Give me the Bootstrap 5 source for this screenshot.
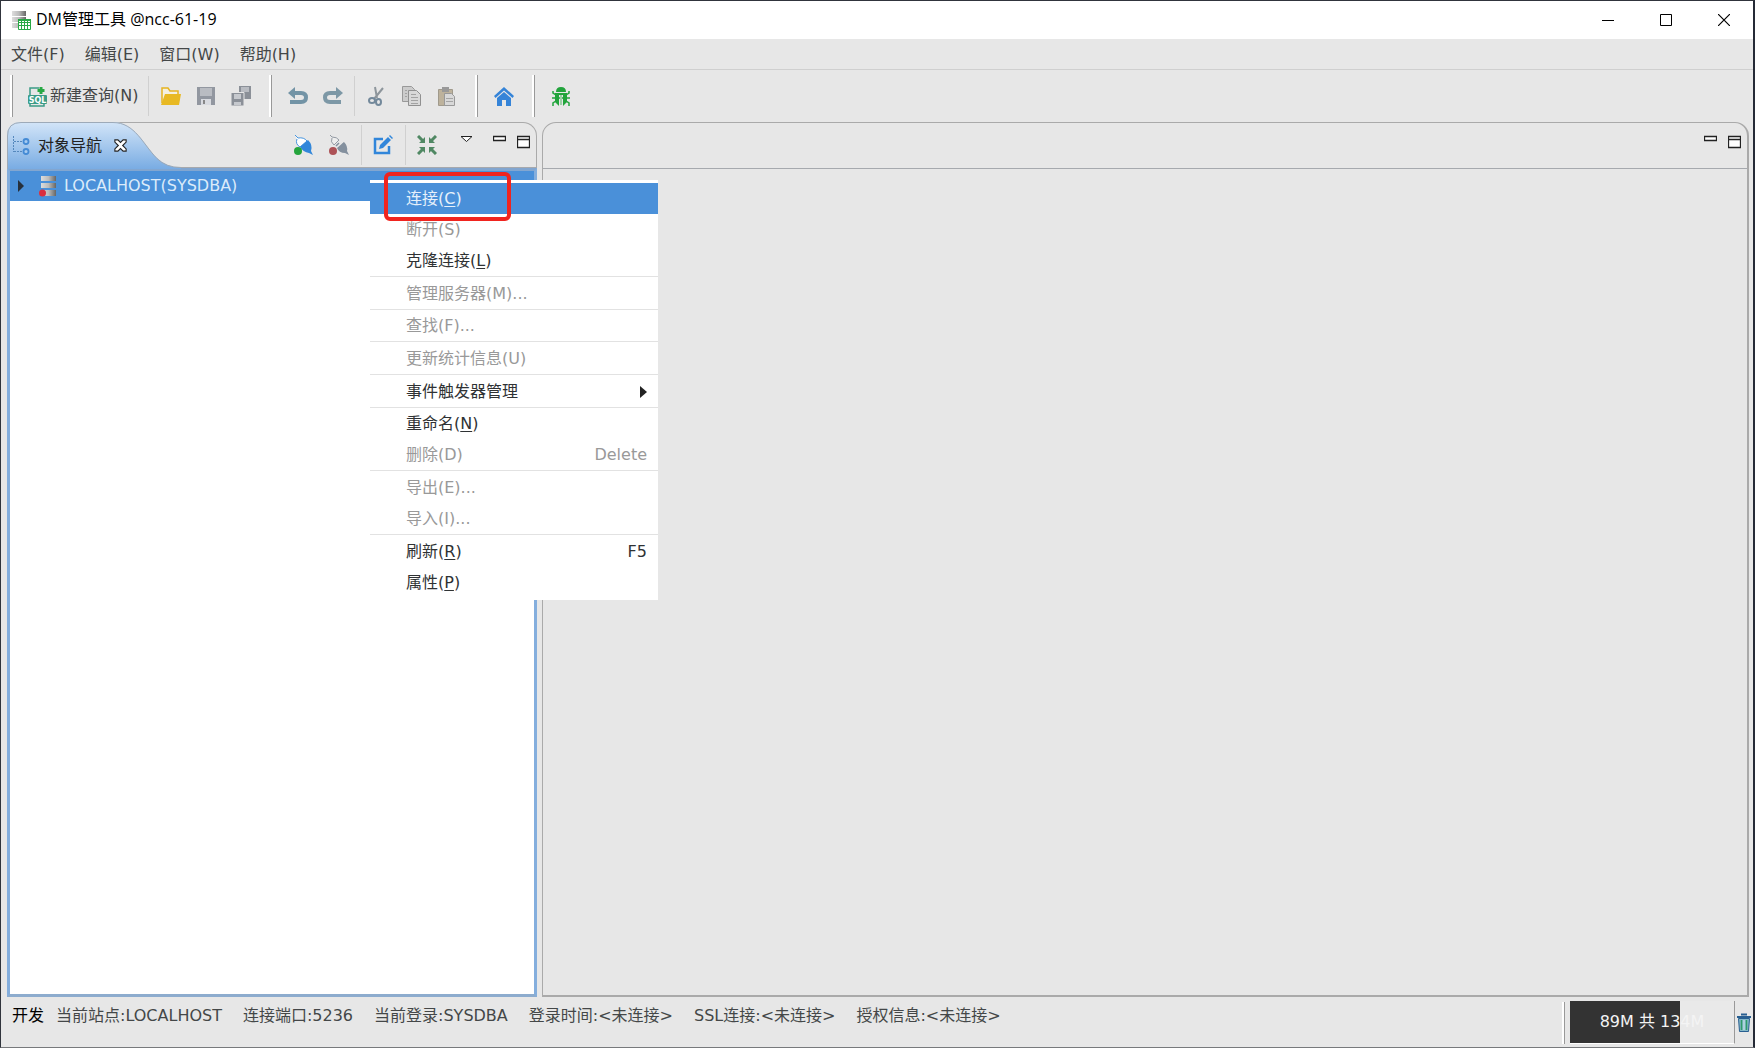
<!DOCTYPE html>
<html lang="zh-CN">
<head>
<meta charset="utf-8">
<meta name="viewport" content="width=device-width, initial-scale=1">
<title>DM管理工具</title>
<link href="https://cdn.jsdelivr.net/npm/bootstrap@5.3.0/dist/css/bootstrap.min.css" rel="stylesheet">
<style>
body{font-family:"DejaVu Sans","Noto Sans CJK SC",sans-serif;font-size:16px;line-height:24px;color:#444748;background:#e7e7e7}
button{font:inherit;color:inherit;background:none;border:0;padding:0}
svg{display:block;flex:none}
.app{border:1px solid #30343c;border-right:2px solid #252a36;border-bottom-color:#77797c;background:#e7e7e7}
.titlebar{height:38px;background:#fff;color:#000;font-family:"Open Sans","Noto Sans CJK SC",sans-serif;font-size:16px;line-height:20px;padding-left:11px}
.titlebar span{padding:0 0 2px 5px}
.winbtn{width:58px;height:38px}
.menubar{height:31px;border-bottom:1px solid #cfcfcf;padding:2px 0 0 10px;gap:20px}
.toolbar{height:52px;padding-left:9px}
.grip{width:3px;height:42px;border-left:2px solid #fff;border-right:1px solid #999;margin:0 8px 0 11px}
.grip.first{margin-left:0}
.tsep{width:1px;height:40px;background:#d0d0d0;margin:0 4px}
.tbtn{width:35px;height:35px}
.newq{padding:0 6px 0 7px;gap:2px;height:35px}
.panes{padding:0 4px 0 6px;gap:5px}
.pane{min-width:0}
.nav-pane{flex:531 1 0}
.edit-pane{flex:1207 1 0;border:1px solid #aaa;border-width:1px 2px 2px 1px;border-radius:14px 14px 0 0}
.pane-head{height:47px;border:1px solid #aaa;border-bottom:2px solid #a6a9ae;border-radius:14px 14px 0 0}
.edit-pane .pane-head{border-width:0 0 1px;height:46px;padding-right:6px}
.nav-pane .pane-head{padding-right:6px}
.tab{width:174px;height:47px;margin:-1px 0 -2px -1px;padding-left:6px;color:#222}
.tab-shape{left:0;top:0;z-index:0}
.tab>*{z-index:1}
.tree{border:3px solid #84aedd;border-top-color:#82a6d0;border-bottom-color:#8dacce;background:#fff;margin-top:-1px}
.node{height:30px;background:#4a90d9;color:#dcebfa;padding-left:7px;gap:14px}
.node span{margin-left:-7px}
.vbtn{height:14px}
.vtools{gap:11px;padding:9px 0 0 15px}
.ctx{left:369px;top:179px;width:288px;height:420px;padding:3px 0 0;border:0;border-radius:0;background:#fff;font-size:16px;z-index:5}
.ctx .dropdown-item{height:31px;padding:0 11px 0 36px;color:#2f3234;line-height:24px}
.ctx .dropdown-item:disabled{color:#999}
.ctx .dropdown-item.active{background:#4a90d9;color:#e6f0fb}
.ctx .dropdown-divider{margin:0;border-color:#e2e2e2;opacity:1}
.ctx .wide{margin-bottom:1px}
.ctx u{text-underline-offset:2px}
.marker{left:383px;top:171px;width:127px;height:49px;border:4px solid #f0241f;border-radius:6px;z-index:6;pointer-events:none}
.status{height:50px;padding-left:11px}
.status-text{padding-top:7px}
.facts{gap:21px}
.status-right{height:43px;padding-right:2px;gap:2px}
.status-right .grip{margin-right:3px}
.heap{width:165px;height:43px;border-radius:0;background:#e9e9e9;border-right:1px solid #999;border-bottom:1px solid #fff;font-size:16px}
.heap .progress-bar{background:#333}
.heap-text{color:#f4f4f4}
</style>
<script src="https://cdn.jsdelivr.net/npm/bootstrap@5.3.0/dist/js/bootstrap.bundle.min.js"></script>
</head>
<body>
<div class="app vh-100 d-flex flex-column position-relative overflow-hidden">
  <header class="titlebar d-flex align-items-center">
    <svg width="19" height="21" viewBox="0 0 19 21"><defs><linearGradient id="srv"><stop offset="0" stop-color="#ddd"/><stop offset=".5" stop-color="#bbb"/><stop offset="1" stop-color="#666"/></linearGradient></defs><path fill="url(#srv)" d="M0 1h14v5H0zM0 7h14v5H0zM0 13h14v5H0z"/><path fill="#fff" stroke="#27a844" d="M6.500 9.500h12v10h-12z"/><path stroke="#27a844" d="M6 12.500h13M6 15.500h13M9.500 9v11M12.500 9v11M15.500 9v11"/><path stroke="#27a844" stroke-width="2" d="M6 10h13"/></svg>
    <span class="flex-grow-1">DM管理工具 @ncc-61-19</span>
    <button class="winbtn d-flex align-items-center justify-content-center" aria-label="最小化"><svg width="12" height="12"><path stroke="#000" d="M0 6.500h12"/></svg></button>
    <button class="winbtn d-flex align-items-center justify-content-center" aria-label="最大化"><svg width="12" height="12"><path fill="none" stroke="#000" d="M.5.5h11v11H.5z"/></svg></button>
    <button class="winbtn d-flex align-items-center justify-content-center" aria-label="关闭"><svg width="12" height="12"><path stroke="#000" stroke-width="1.200" d="M0 0l12 12M12 0L0 12"/></svg></button>
  </header>
  <nav class="menubar d-flex align-items-center">
    <button>文件(F)</button><button>编辑(E)</button><button>窗口(W)</button><button>帮助(H)</button>
  </nav>
  <div class="toolbar d-flex align-items-center" role="toolbar">
    <span class="grip first"></span>
    <button class="newq d-flex align-items-center"><svg width="20" height="21" viewBox="0 0 20 21"><path fill="none" stroke="#3b9c86" stroke-width="1.500" d="M2 9V2h9M16 9v2M2 18v2h14v-2"/><rect y="9" width="19" height="9" rx="1" fill="#3b9c86"/><path stroke="#27a844" stroke-width="3" d="M13 1v7M9.500 4.500h7"/><text x="9.500" y="16.500" font-family="DejaVu Sans" font-size="8" font-weight="700" text-anchor="middle" fill="#fff">SQL</text></svg><span>新建查询(N)</span></button>
    <span class="tsep"></span>
    <button class="tbtn d-flex align-items-center justify-content-center" aria-label="打开"><svg width="20" height="18" viewBox="0 0 20 18"><path fill="#f4f0e0" stroke="#e6b422" stroke-width="1.500" d="M1 16V1h6l2 3h8v4"/><path fill="#e8b923" d="M4 7h16l-2 11H0z"/></svg></button>
    <button class="tbtn d-flex align-items-center justify-content-center" aria-label="保存"><svg width="18" height="18" viewBox="0 0 18 18"><path fill="#9297a0" d="M0 0h18v18H0z"/><path fill="#b9bcc2" d="M3 1h12v8H3z"/><path fill="#d9dbe0" d="M4 12h10v6H4z"/><path fill="#888" d="M6 13h2v4H6z"/></svg></button>
    <button class="tbtn d-flex align-items-center justify-content-center" aria-label="全部保存"><svg width="20" height="20" viewBox="0 0 20 20"><path fill="#8b9098" d="M8 0h12v13H8z"/><path fill="#b9bcc2" d="M10 1h8v5h-8z"/><path fill="#8b9098" stroke="#e7e7e7" d="M0 6.500h13V20H0z"/><path fill="#c6c9ce" d="M3 8h7v5H3zM3 16h7v3H3z"/></svg></button>
    <span class="grip"></span>
    <button class="tbtn d-flex align-items-center justify-content-center" aria-label="撤销"><svg width="20" height="18" viewBox="0 0 20 18"><path fill="none" stroke="#7394a6" stroke-width="4" d="M5 6h8q5 0 5 4.500T13 15H2"/><path fill="#7394a6" d="M0 6l7-6v12z"/></svg></button>
    <button class="tbtn d-flex align-items-center justify-content-center" aria-label="重做"><svg width="20" height="18" viewBox="0 0 20 18"><path fill="none" stroke="#7d98a6" stroke-width="4" d="M15 6H7q-5 0-5 4.500T7 15h11"/><path fill="#7d98a6" d="M20 6l-7-6v12z"/></svg></button>
    <span class="tsep"></span>
    <button class="tbtn d-flex align-items-center justify-content-center" aria-label="剪切"><svg width="18" height="20" viewBox="0 0 18 20"><path fill="none" stroke="#8e969c" stroke-width="2" d="M7 1l2 11M15 2L6 13"/><ellipse cx="4" cy="14.500" rx="3" ry="2.500" fill="none" stroke="#73899b" stroke-width="2"/><ellipse cx="10.500" cy="16" rx="2.500" ry="3" fill="none" stroke="#73899b" stroke-width="2"/></svg></button>
    <button class="tbtn d-flex align-items-center justify-content-center" aria-label="复制"><svg width="20" height="20" viewBox="0 0 20 20"><path fill="#ccc" stroke="#999" d="M.5.5h9l3 3v12H.5z"/><path fill="#d8d8d8" stroke="#919191" d="M6.500 4.500h8l4 4v11h-12z"/><path stroke="#a2a2a2" d="M3 4.500h2M3 7.500h2M3 10.500h2M9 8.500h5M9 11.500h7M9 14.500h7M9 17.500h7"/></svg></button>
    <button class="tbtn d-flex align-items-center justify-content-center" aria-label="粘贴"><svg width="18" height="20" viewBox="0 0 18 20"><path fill="#bdb29c" stroke="#a09a8c" d="M.5 3.500h14v16H.5z"/><path fill="#999" d="M4 1h7v5H4z"/><path fill="#d8d8d8" stroke="#999" d="M6.500 7.500h7l3 3v9h-10z"/><path stroke="#a5a5a5" d="M8 12.500h7M8 15.500h7"/></svg></button>
    <span class="grip"></span>
    <button class="tbtn d-flex align-items-center justify-content-center" aria-label="主页"><svg width="20" height="19" viewBox="0 0 20 19"><path fill="#3584d8" d="M10 0l10 9-1.500 2L10 3.500 1.500 11 0 9z"/><path fill="#3584d8" d="M10 5l7 6v8h-5v-6H8v6H3v-8z"/></svg></button>
    <span class="grip"></span>
    <button class="tbtn d-flex align-items-center justify-content-center" aria-label="调试"><svg width="18" height="19" viewBox="0 0 18 19"><path fill="#22a43c" d="M4 5q0-5 5-5t5 5zM3 6h12v9l-4 4V8H7v11l-4-4z"/><path stroke="#22a43c" stroke-width="1.500" fill="none" d="M4 8L1 6V4M14 8l3-2V4M0 11h18M4 14l-3 2v3M14 14l3 2v3"/><path fill="#9ccfa6" d="M8 8h2v10H8z"/></svg></button>
  </div>
  <main class="panes d-flex flex-grow-1">
    <section class="pane nav-pane d-flex flex-column">
      <div class="pane-head d-flex">
        <div class="tab position-relative d-flex align-items-center">
          <svg class="tab-shape position-absolute" width="174" height="47" viewBox="0 0 174 47"><defs><linearGradient id="tg" x2="0" y2="1"><stop offset="0" stop-color="#d3e5f8"/><stop offset="1" stop-color="#79ace3"/></linearGradient></defs><path fill="url(#tg)" d="M0 47V14Q0 0 14 0h92c22 0 30 22 44 36q9 9 24 10v1z"/><path fill="none" stroke="#9daab8" d="M.5 47V14Q.5.5 14 .5h92c22 0 30 22 44 36q9 9 24 9"/></svg>
          <svg class="position-relative" width="17" height="19" viewBox="0 0 17 19"><path fill="none" stroke="#5588bd" stroke-dasharray="2 1" d="M.5 0v16M1 5.500h9M1 15.500h9"/><circle cx="13" cy="5.500" r="2.500" fill="#a9ccf0" stroke="#458bd5" stroke-width="1.800"/><circle cx="13" cy="15.500" r="2.500" fill="#a9ccf0" stroke="#458bd5" stroke-width="1.800"/></svg>
          <span class="position-relative ms-1 ps-1">对象导航</span>
          <button class="position-relative ms-2 ps-1" aria-label="关闭视图"><svg width="13" height="13" viewBox="0 0 15 15"><path fill="#fff" stroke="#222" stroke-width="1.300" d="M1 1h3.500l3 3 3-3H14v2.500l-4 4 4 4V14h-3.500l-3-3-3 3H1v-2.500l4-4-4-4z"/></svg></button>
        </div>
        <div class="d-flex align-items-center ms-auto">
          <button class="tbtn d-flex align-items-center justify-content-center" aria-label="连接"><svg width="20" height="20" viewBox="0 0 20 20"><path fill="#fff" stroke="#4795df" d="M1 0l3 3q6-1 9 3l-7 6Q1 9 3 4"/><path fill="#3287da" d="M6 12l8-7q5 5 3 11l2 4-4-2q-6-1-9-6z"/><circle cx="4" cy="16" r="4" fill="#25a53d"/></svg></button>
          <button class="tbtn d-flex align-items-center justify-content-center" aria-label="断开"><svg width="20" height="20" viewBox="0 0 20 20"><path fill="#eee" stroke="#939aa3" d="M1 0l2 2q5 0 7 3l-5 5Q1 7 3 3"/><path stroke="#84909e" stroke-width="1.500" d="M7 11l3-3M11 13l4-5"/><path fill="#84909e" d="M8 13l7-6q4 4 3 9l2 4-4-2q-6 0-8-5z"/><circle cx="4" cy="16" r="4" fill="#ad5257"/></svg></button>
          <span class="tsep"></span>
          <button class="tbtn d-flex align-items-center justify-content-center" aria-label="编辑"><svg width="20" height="20" viewBox="0 0 20 20"><path fill="none" stroke="#3186da" stroke-width="2.500" d="M10 4H2v14h14v-7"/><path fill="#3186da" d="M7 10l8-8 3 3-8 8-4 1zM16 1l1-1 3 3-1 1z"/></svg></button>
          <span class="tsep"></span>
          <button class="tbtn d-flex align-items-center justify-content-center" aria-label="折叠"><svg width="20" height="20" viewBox="0 0 20 20"><path stroke="#508863" stroke-width="3" d="M1 1l6 6M19 1l-6 6M1 19l6-6M19 19l-6-6"/><path fill="#508863" d="M8 2v6H2zM12 2v6h6zM8 18v-6H2zM12 18v-6h6z"/></svg></button>
          <div class="vtools d-flex align-self-start">
            <button class="vbtn me-2" aria-label="视图菜单"><svg width="14" height="14"><path fill="#fff" stroke="#222" d="M1 4.500h11l-5.500 5z"/></svg></button>
            <button class="vbtn" aria-label="最小化"><svg width="13" height="14"><path fill="#fff" stroke="#222" stroke-width="1.300" d="M.5 4.500h12v4H.5z"/></svg></button>
            <button class="vbtn" aria-label="最大化"><svg width="13" height="18"><path fill="#fff" stroke="#222" stroke-width="1.300" d="M.5 4.500h12v11H.5zM.5 7.500h12"/></svg></button>
          </div>
        </div>
      </div>
      <div class="tree flex-grow-1">
        <div class="node d-flex align-items-center">
          <svg width="8" height="12"><path fill="#26303c" d="M1 0l6 6-6 6z"/></svg>
          <svg width="18" height="21" viewBox="0 0 18 21"><path fill="url(#srv)" d="M2 0h15v5H2zM2 7h15v5H2zM2 14h15v6H2z"/><circle cx="3.500" cy="17" r="3.500" fill="#dc2f3e"/></svg>
          <span>LOCALHOST(SYSDBA)</span>
        </div>
      </div>
    </section>
    <section class="pane edit-pane">
      <div class="pane-head d-flex justify-content-end">
        <div class="vtools d-flex">
          <button class="vbtn" aria-label="最小化"><svg width="13" height="14"><path fill="#fff" stroke="#222" stroke-width="1.300" d="M.5 4.500h12v4H.5z"/></svg></button>
          <button class="vbtn" aria-label="最大化"><svg width="13" height="18"><path fill="#fff" stroke="#222" stroke-width="1.300" d="M.5 4.500h12v11H.5zM.5 7.500h12"/></svg></button>
        </div>
      </div>
    </section>
  </main>
  <footer class="status d-flex text-nowrap">
    <div class="status-text d-flex align-self-start flex-grow-1">
      <span class="text-black me-2 pe-1">开发</span>
      <div class="facts d-flex flex-grow-1"><span>当前站点:LOCALHOST</span><span>连接端口:5236</span><span>当前登录:SYSDBA</span><span>登录时间:&lt;未连接&gt;</span><span>SSL连接:&lt;未连接&gt;</span><span>授权信息:&lt;未连接&gt;</span></div>
    </div>
    <div class="status-right d-flex align-items-center mt-1">
      <span class="grip"></span>
      <div class="heap progress position-relative" role="progressbar" aria-label="堆内存" aria-valuenow="67" aria-valuemin="0" aria-valuemax="100"><div class="progress-bar" style="width:67%"></div><span class="heap-text position-absolute top-50 start-50 translate-middle">89M 共 134M</span></div>
      <button aria-label="回收"><svg width="14" height="20" viewBox="0 0 14 20"><path fill="#83b8c7" stroke="#285f91" d="M1.500 5.500h11l-1 13h-9z"/><path stroke="#285f91" stroke-width="2" d="M0 4h14M4 1.500h6"/><path stroke="#2f9b69" stroke-width="1.500" d="M4.500 7v10M9.500 7v10"/><path stroke="#d7edf0" d="M7 7v10"/></svg></button>
    </div>
  </footer>

  <div class="ctx dropdown-menu show">
    <button class="dropdown-item active d-flex align-items-center"><span>连接(<u>C</u>)</span></button>
    <button class="dropdown-item d-flex align-items-center" disabled>断开(S)</button>
    <button class="dropdown-item d-flex align-items-center"><span>克隆连接(<u>L</u>)</span></button>
    <hr class="dropdown-divider wide">
    <button class="dropdown-item d-flex align-items-center" disabled>管理服务器(M)...</button>
    <hr class="dropdown-divider">
    <button class="dropdown-item d-flex align-items-center" disabled>查找(F)...</button>
    <hr class="dropdown-divider wide">
    <button class="dropdown-item d-flex align-items-center" disabled>更新统计信息(U)</button>
    <hr class="dropdown-divider wide">
    <button class="dropdown-item d-flex align-items-center justify-content-between"><span>事件触发器管理</span><svg width="8" height="12"><path fill="#222" d="M1 0l7 6-7 6z"/></svg></button>
    <hr class="dropdown-divider">
    <button class="dropdown-item d-flex align-items-center"><span>重命名(<u>N</u>)</span></button>
    <button class="dropdown-item d-flex align-items-center justify-content-between" disabled><span>删除(D)</span><span>Delete</span></button>
    <hr class="dropdown-divider wide">
    <button class="dropdown-item d-flex align-items-center" disabled>导出(E)...</button>
    <button class="dropdown-item d-flex align-items-center" disabled>导入(I)...</button>
    <hr class="dropdown-divider wide">
    <button class="dropdown-item d-flex align-items-center justify-content-between"><span>刷新(<u>R</u>)</span><span>F5</span></button>
    <button class="dropdown-item d-flex align-items-center"><span>属性(<u>P</u>)</span></button>
  </div>
  <div class="marker position-absolute"></div>
</div>
</body>
</html>
